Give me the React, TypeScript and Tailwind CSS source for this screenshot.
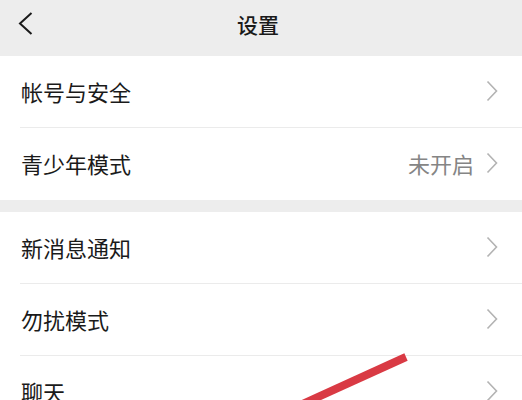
import React from "react";

const Chevron = () => (
  <svg width="12" height="22" viewBox="0 0 12 22" className="shrink-0">
    <path d="M1.5 1.5 L10.5 11 L1.5 20.5" fill="none" stroke="#b3b3b3" strokeWidth="1.6" />
  </svg>
);

const Row = ({ label, value, divider }: { label: string; value?: string; divider?: boolean }) => (
  <div className="relative flex h-[72px] items-center bg-white pb-[2px] pl-[21px] pr-[24px]">
    <span className="flex-1 text-[22px] leading-none text-[#1a1a1a]">{label}</span>
    {value && <span className="mr-[12px] text-[22px] leading-none text-[#858585]">{value}</span>}
    <Chevron />
    {divider && <div className="absolute bottom-0 left-[20px] right-0 h-px bg-[#ebebeb]" />}
  </div>
);

export default function App() {
  return (
    <div
      className="relative h-[400px] w-[522px] overflow-hidden bg-[#ededed]"
      style={{ fontFamily: '"Noto Sans CJK SC", "Noto Sans", sans-serif' }}
    >
      <div className="relative flex h-[56px] items-center justify-center bg-[#ededed] pb-[8px]">
        <svg width="16" height="24" viewBox="0 0 16 24" className="absolute left-[18px] top-[12px]">
          <path d="M13.5 1 L2 11.5 L13.5 22" fill="none" stroke="#1a1a1a" strokeWidth="2" />
        </svg>
        <span className="-ml-[6px] text-[21px] font-medium leading-none text-[#1a1a1a]">设置</span>
      </div>
      <Row label="帐号与安全" divider />
      <Row label="青少年模式" value="未开启" />
      <div className="h-[12px]" />
      <Row label="新消息通知" divider />
      <Row label="勿扰模式" divider />
      <Row label="聊天" />
      <svg width="522" height="400" className="pointer-events-none absolute left-0 top-0">
        <line x1="406" y1="357" x2="285" y2="412" stroke="#d93a44" strokeWidth="8" />
      </svg>
    </div>
  );
}
